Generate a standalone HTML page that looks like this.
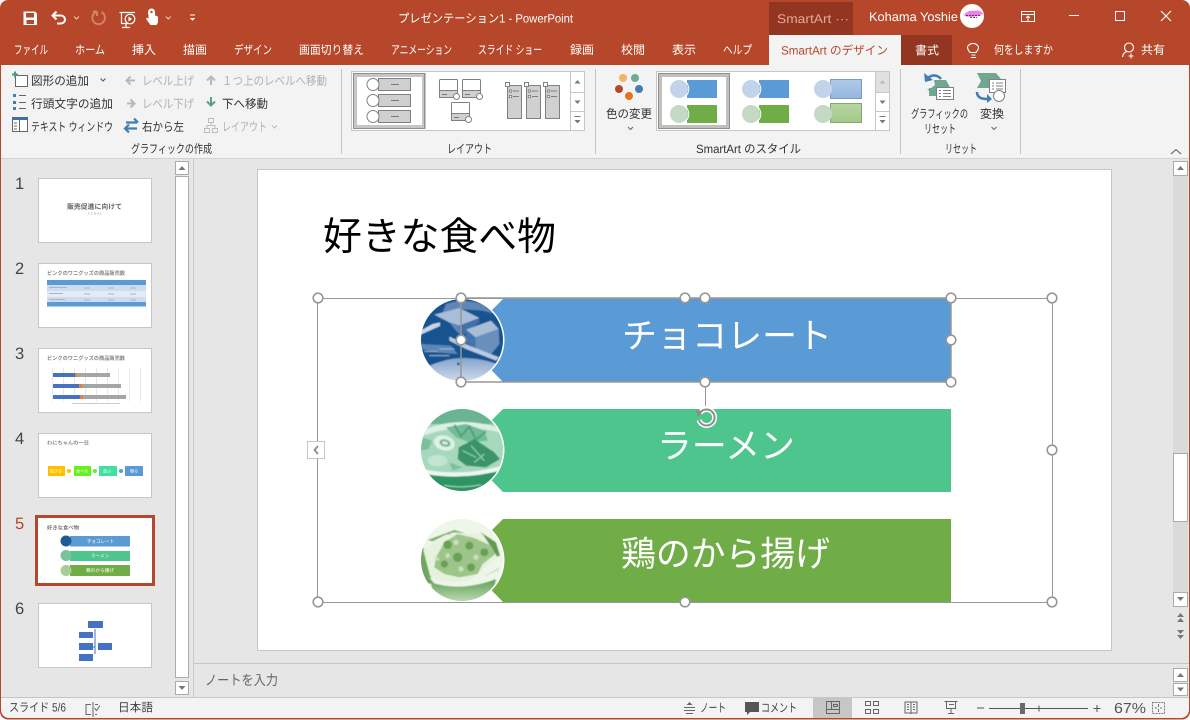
<!DOCTYPE html>
<html lang="ja"><head><meta charset="utf-8"><title>PowerPoint</title>
<style>
html,body{margin:0;padding:0;background:#fff;width:1190px;height:720px;overflow:hidden}
svg{display:block;font-family:"Liberation Sans","Noto Sans CJK JP",sans-serif;font-size:12px}
.d{fill:#333}.g{fill:#b0b0b0}.w{fill:#fff}
.sb{fill:#fff;stroke:#ababab;stroke-width:1}
.ar{fill:#777}
.h{fill:#fff;stroke:#979797;stroke-width:1.6}
.ln{fill:none;stroke:#808080;stroke-width:1}
</style></head><body>
<svg width="1190" height="720" viewBox="0 0 1190 720" xmlns="http://www.w3.org/2000/svg" text-rendering="geometricPrecision">
<defs>
<clipPath id="c1"><circle cx="462" cy="340" r="41.500"/></clipPath>
<clipPath id="c2"><circle cx="462" cy="450" r="41.500"/></clipPath>
<clipPath id="c3"><circle cx="462" cy="560" r="41.500"/></clipPath>
<linearGradient id="gb" x1="0" y1="0" x2="0" y2="1"><stop offset="0" stop-color="#b0cbe9"/><stop offset="1" stop-color="#94b6df"/></linearGradient>
<linearGradient id="gg" x1="0" y1="0" x2="0" y2="1"><stop offset="0" stop-color="#b6d6a3"/><stop offset="1" stop-color="#a2c989"/></linearGradient>
<linearGradient id="cb" x1="0" y1="0" x2="0" y2="1"><stop offset="0" stop-color="#86a3cc"/><stop offset="1" stop-color="#dfe6f2"/></linearGradient>
<linearGradient id="kb" x1="0" y1="0" x2="0" y2="1"><stop offset="0" stop-color="#5f9f56"/><stop offset="1" stop-color="#cfe4c4"/></linearGradient>
<filter id="bl" x="-5%" y="-5%" width="110%" height="110%"><feGaussianBlur stdDeviation="0.5"/></filter>
</defs>
<!-- window -->
<rect x="0" y="0" width="1190" height="719.500" rx="8" fill="#b7472a"/>
<rect x="1" y="65" width="1188" height="93" fill="#f3f3f3"/>
<rect x="1" y="158" width="1188" height="1" fill="#d2d2d2"/>
<rect x="1" y="159" width="1188" height="539" fill="#e6e6e6"/>
<path d="M1 698H1189V710a8 8 0 0 1-8 8H9a8 8 0 0 1-8-8Z" fill="#f3f3f3"/>
<rect x="1" y="697" width="1188" height="1" fill="#c6c6c6"/>

<!-- title bar -->
<path d="M23.500 11.500H35l2 2V25H23.500ZM26 13v4.500h8V13ZM26.500 20v4h7.500v-4Z" fill="#fff" fill-rule="evenodd"/>
<path d="M53 15.500H61a4 4 0 0 1 0 8H57M56.500 11.500L52.500 15.500L56.500 19.500" fill="none" stroke="#fff" stroke-width="2"/>
<path d="M74 16.500l2.500 2.500l2.500-2.500M165.800 16.500l2.500 2.500l2.500-2.500" fill="none" stroke="#e9c9bf" stroke-width="1"/>
<path d="M101.500 12.200a6.300 6.300 0 1 1-5-.3M97 11.500v4.500M97 11.500h-4" fill="none" stroke="#d3816b" stroke-width="2"/>
<path d="M119.500 12.500H135M121.500 12.500V23.500H128M126 24v3M122 27.500h8" fill="none" stroke="#fff" stroke-width="1.200"/>
<circle cx="130" cy="19" r="4.800" fill="#b7472a" stroke="#fff" stroke-width="1.200"/><path d="M128.500 16.500l3.500 2.500l-3.500 2.500Z" fill="#fff"/>
<path d="M148 12a3.500 3.500 0 0 1 7 0v3.500l2 .5c.8.300 1 1 1 2v4.500l-1.500 2.500h-6l-3-4l-1.500-2.500l1 -.8l1.500 1V15c-.5-.8-.500-1.800-.5-3Z" fill="#fff"/>
<circle cx="151.500" cy="12" r="1.200" fill="#b7472a"/>
<path d="M190 15h5" stroke="#fff" stroke-width="1"/><path d="M189.800 18h5.400l-2.700 2.800Z" fill="#fff"/>
<text x="398" y="22.500" class="w" textLength="175" lengthAdjust="spacingAndGlyphs" font-size="12">プレゼンテーション1  -  PowerPoint</text>
<rect x="769" y="2" width="84" height="33" fill="#933621"/>
<text x="777" y="23" fill="#e4a894" textLength="72" lengthAdjust="spacingAndGlyphs" font-size="12.500">SmartArt ···</text>
<text x="869" y="21" class="w" textLength="89" lengthAdjust="spacingAndGlyphs" font-size="12.500">Kohama Yoshie</text>
<circle cx="972" cy="16" r="12" fill="#fff"/>
<path d="M968 13.500l4-2.500 10-.5c2 1 3.500 2 4 3.500l-3 1.500-8 1.500-6-.5-2-1Z" fill="#ee7fe8" transform="translate(-3 0)"/>
<path d="M966 15.500h14M970 17.500h7" stroke="#222" stroke-width=".8" stroke-dasharray="2 1" fill="none"/>
<path d="M1021.500 11.500h13v10h-13ZM1021.500 14.500h13M1028 21v-4.500M1026 18l2-2l2 2" fill="none" stroke="#fff" stroke-width="1"/>
<path d="M1069 15.500h10" stroke="#fff" stroke-width="1"/>
<rect x="1115.500" y="11.500" width="9" height="9" fill="none" stroke="#fff" stroke-width="1"/>
<path d="M1161 11l10 10M1171 11l-10 10" stroke="#fff" stroke-width="1.100"/>

<!-- tabs -->
<g class="w" font-size="12">
<text x="14" y="54" class="w" textLength="34" lengthAdjust="spacingAndGlyphs">ファイル</text>
<text x="75" y="54" class="w" textLength="30" lengthAdjust="spacingAndGlyphs">ホーム</text>
<text x="132" y="54" class="w" textLength="24" lengthAdjust="spacingAndGlyphs">挿入</text>
<text x="183" y="54" class="w" textLength="24" lengthAdjust="spacingAndGlyphs">描画</text>
<text x="234" y="54" class="w" textLength="38" lengthAdjust="spacingAndGlyphs">デザイン</text>
<text x="299" y="54" class="w" textLength="65" lengthAdjust="spacingAndGlyphs">画面切り替え</text>
<text x="391" y="54" class="w" textLength="61" lengthAdjust="spacingAndGlyphs">アニメーション</text>
<text x="478" y="54" class="w" textLength="64" lengthAdjust="spacingAndGlyphs">スライド ショー</text>
<text x="570" y="54" class="w" textLength="24" lengthAdjust="spacingAndGlyphs">録画</text>
<text x="621" y="54" class="w" textLength="24" lengthAdjust="spacingAndGlyphs">校閲</text>
<text x="672" y="54" class="w" textLength="24" lengthAdjust="spacingAndGlyphs">表示</text>
<text x="723" y="54" class="w" textLength="29" lengthAdjust="spacingAndGlyphs">ヘルプ</text>
</g>
<rect x="769" y="35" width="132" height="30" fill="#f3f3f3"/>
<text x="781" y="54.500" fill="#b7472a" textLength="107" lengthAdjust="spacingAndGlyphs">SmartArt のデザイン</text>
<rect x="901" y="35" width="51" height="30" fill="#933621"/>
<text x="915" y="54.500" class="w" textLength="24" lengthAdjust="spacingAndGlyphs">書式</text>
<path d="M971 57.500h5M971.500 55h4M970 52.500c-1-1.500-2.500-2.800-2.500-5.500a6 6 0 0 1 11 0c0 2.700-1.500 4-2.500 5.500Z" fill="none" stroke="#fff" stroke-width="1.100"/>
<text x="994" y="54" class="w" textLength="59" lengthAdjust="spacingAndGlyphs">何をしますか</text>
<circle cx="1129" cy="47.500" r="4.500" fill="none" stroke="#fff" stroke-width="1.100"/>
<path d="M1122.500 57c.5-3.500 2.500-5 4.500-5.500M1131 53.500v5M1128.500 56h5" fill="none" stroke="#fff" stroke-width="1.100"/>
<text x="1141" y="54" class="w" textLength="24" lengthAdjust="spacingAndGlyphs">共有</text>

<!-- ribbon group 1 -->
<rect x="15.500" y="75.500" width="12" height="11" fill="#fff" stroke="#666"/>
<path d="M15 71.500v6M12 74.500h6" stroke="#4b9b7c" stroke-width="2"/>
<text x="31" y="85" class="d" textLength="58" lengthAdjust="spacingAndGlyphs">図形の追加</text>
<path d="M100.500 78.500l2.500 2.500l2.500-2.500" fill="none" stroke="#555"/>
<g fill="#3f7fb5"><rect x="13" y="94" width="3" height="3"/><rect x="13" y="101" width="3" height="3"/><rect x="13" y="107" width="3" height="3"/></g>
<path d="M19 95.500h7M19 102.500h7M19 108.500h7" stroke="#666"/>
<text x="31" y="108" class="d" textLength="82" lengthAdjust="spacingAndGlyphs">行頭文字の追加</text>
<rect x="12.500" y="117.500" width="15" height="14" fill="#fff" stroke="#666"/><rect x="12" y="117" width="16" height="3" fill="#3f6fa8"/>
<path d="M19.500 120v11M14 123h3M14 126h3M14 129h3" stroke="#666"/>
<text x="31" y="131" class="d" textLength="82" lengthAdjust="spacingAndGlyphs">テキスト ウィンドウ</text>
<path d="M135 80.500h-8M130.500 76.500l-4 4l4 4" fill="none" stroke="#b8b8b8" stroke-width="2"/>
<text x="142" y="85" class="g" textLength="52" lengthAdjust="spacingAndGlyphs">レベル上げ</text>
<path d="M127 103.500h7M130.500 99.500l4 4l-4 4" fill="none" stroke="#b8b8b8" stroke-width="2"/>
<text x="142" y="108" class="g" textLength="52" lengthAdjust="spacingAndGlyphs">レベル下げ</text>
<path d="M126 122.500h11M134 118.500l4 4" fill="none" stroke="#3f7fb5" stroke-width="2.200"/>
<path d="M137 128.500h-11M129 124.500l-4 4l4 4" fill="none" stroke="#3f7fb5" stroke-width="2.200"/>
<text x="142" y="131" class="d" textLength="42" lengthAdjust="spacingAndGlyphs">右から左</text>
<path d="M211 85v-8M207 80.500l4-4l4 4" fill="none" stroke="#b8b8b8" stroke-width="2"/>
<text x="222" y="85" class="g" textLength="105" lengthAdjust="spacingAndGlyphs">１つ上のレベルへ移動</text>
<path d="M211 97v8M207 101.500l4 4l4-4" fill="none" stroke="#5f9e88" stroke-width="2"/>
<text x="222" y="108" class="d" textLength="46" lengthAdjust="spacingAndGlyphs">下へ移動</text>
<path d="M208.500 118.500h5v4h-5ZM204.500 128.500h5v4h-5ZM212.500 128.500h5v4h-5ZM211 122.500v3M207 128v-2.500h8v2.500" fill="none" stroke="#bdbdbd"/>
<text x="222" y="131" class="g" textLength="45" lengthAdjust="spacingAndGlyphs">レイアウト</text>
<path d="M272 125.500l2.500 2.500l2.500-2.500" fill="none" stroke="#b8b8b8"/>
<text x="131" y="153" class="d" textLength="81" lengthAdjust="spacingAndGlyphs">グラフィックの作成</text>
<rect x="341" y="69" width="1" height="85" fill="#c4c4c4"/>

<!-- layout gallery -->
<rect x="351.500" y="71.500" width="233" height="59" fill="#fff" stroke="#c6c6c6"/>
<rect x="355" y="75" width="69" height="52" fill="#fff" stroke="#c6c6c6" stroke-width="4"/>
<rect x="353.500" y="73.500" width="71" height="55" fill="none" stroke="#8f8f8f"/>
<g fill="#d0d0d0" stroke="#808080">
<rect x="378.500" y="78.500" width="32" height="12"/><rect x="378.500" y="94.500" width="32" height="12"/><rect x="378.500" y="110.500" width="32" height="12"/>
</g>
<g fill="#fff" stroke="#808080"><circle cx="373" cy="84.500" r="6"/><circle cx="373" cy="100.500" r="6"/><circle cx="373" cy="116.500" r="6"/></g>
<path d="M391 84.500h8M391 100.500h8M391 116.500h8" stroke="#777"/>
<g>
<rect x="439.500" y="79.500" width="18" height="18" rx="1" fill="#fff" stroke="#808080"/><rect x="439.500" y="90.500" width="18" height="7" fill="#d0d0d0" stroke="#808080"/>
<rect x="462.500" y="79.500" width="18" height="18" rx="1" fill="#fff" stroke="#808080"/><rect x="462.500" y="90.500" width="18" height="7" fill="#d0d0d0" stroke="#808080"/>
<rect x="451.500" y="102.500" width="18" height="18" rx="1" fill="#fff" stroke="#808080"/><rect x="451.500" y="113.500" width="18" height="7" fill="#d0d0d0" stroke="#808080"/>
<path d="M442 94.500h5M465 94.500h5M454 117.500h5" stroke="#777"/>
<g fill="#fff" stroke="#808080"><circle cx="456.500" cy="96.500" r="3"/><circle cx="479.500" cy="96.500" r="3"/><circle cx="468.500" cy="119.500" r="3"/></g>
</g>
<g fill="#d0d0d0" stroke="#808080"><rect x="507.500" y="85.500" width="14" height="33"/><rect x="526.500" y="85.500" width="14" height="33"/><rect x="545.500" y="85.500" width="14" height="33"/></g>
<g fill="#fff" stroke="#808080"><rect x="505.500" y="82.500" width="4" height="4"/><rect x="524.500" y="82.500" width="4" height="4"/><rect x="543.500" y="82.500" width="4" height="4"/>
<circle cx="510.500" cy="91" r="1.300"/><circle cx="510.500" cy="96.500" r="1.300"/><circle cx="529.500" cy="91" r="1.300"/><circle cx="529.500" cy="96.500" r="1.300"/><circle cx="548.500" cy="91" r="1.300"/><circle cx="548.500" cy="96.500" r="1.300"/></g>
<path d="M513 91h6M513 96.500h6M532 91h6M532 96.500h6M551 91h6M551 96.500h6" stroke="#808080"/>
<path d="M570.500 71.500v59M570.500 92.500h14M570.500 111.500h14" stroke="#c6c6c6" fill="none"/>
<path class="ar" d="M574.500 83.500l3-3.500l3 3.500Z"/><path class="ar" d="M574.500 100.500l3 3.500l3-3.500Z"/><path class="ar" d="M574.500 116h6v1h-6Z"/><path class="ar" d="M574.500 120l3 3.500l3-3.500Z"/>
<text x="447" y="153" class="d" textLength="45" lengthAdjust="spacingAndGlyphs">レイアウト</text>
<rect x="595" y="69" width="1" height="85" fill="#c4c4c4"/>

<!-- colour change -->
<circle cx="623" cy="78" r="4" fill="#efb664"/><circle cx="635" cy="78" r="4" fill="#6dab94"/><circle cx="619" cy="89" r="4" fill="#b7472a"/><circle cx="639" cy="89" r="4" fill="#3f7fb5"/><circle cx="629" cy="96" r="4" fill="#e5721e"/>
<text x="606" y="118" class="d" textLength="46" lengthAdjust="spacingAndGlyphs">色の変更</text>
<path d="M628 127l2.500 2.500l2.500-2.500" fill="none" stroke="#666"/>

<!-- style gallery -->
<rect x="656.500" y="71.500" width="233" height="59" fill="#fff" stroke="#c6c6c6"/>
<rect x="660" y="75" width="68" height="52" fill="#fff" stroke="#c0c0bc" stroke-width="4"/>
<rect x="658.500" y="73.500" width="71" height="55" fill="none" stroke="#8f8f8f"/>
<rect x="687" y="80" width="30" height="18" fill="#5b9bd5"/><rect x="687" y="105" width="30" height="18" fill="#70ad47"/>
<circle cx="679" cy="89" r="9" fill="#c2d3ea"/><circle cx="679" cy="114" r="9" fill="#c4dac4"/>
<circle cx="679" cy="89" r="9.800" fill="none" stroke="#fff"/><circle cx="679" cy="114" r="9.800" fill="none" stroke="#fff"/>
<rect x="759" y="80" width="30" height="18" fill="#5b9bd5"/><rect x="759" y="105" width="30" height="18" fill="#70ad47"/>
<circle cx="751" cy="89" r="9" fill="#c2d3ea"/><circle cx="751" cy="114" r="9" fill="#c4dac4"/>
<circle cx="751" cy="89" r="9.800" fill="none" stroke="#fff"/><circle cx="751" cy="114" r="9.800" fill="none" stroke="#fff"/>
<rect x="830.500" y="79.500" width="31" height="19" fill="url(#gb)" stroke="#7f9cc0"/><rect x="830.500" y="103.500" width="31" height="19" fill="url(#gg)" stroke="#84a86e"/>
<circle cx="823" cy="89" r="9" fill="#c2d3ea"/><circle cx="823" cy="114" r="9" fill="#c4dac4"/>
<rect x="875" y="72" width="14" height="20" fill="#e0e0e0"/>
<path d="M875.500 71.500v59M875.500 92.500h14M875.500 111.500h14" stroke="#c6c6c6" fill="none"/>
<path fill="#bbb" d="M879.500 83.500l3-3.500l3 3.500Z"/><path class="ar" d="M879.500 100.500l3 3.500l3-3.500Z"/><path class="ar" d="M879.500 116h6v1h-6Z"/><path class="ar" d="M879.500 120l3 3.500l3-3.500Z"/>
<text x="696" y="153" class="d" textLength="105" lengthAdjust="spacingAndGlyphs">SmartArt のスタイル</text>
<rect x="900" y="69" width="1" height="85" fill="#c4c4c4"/>

<!-- reset -->
<path d="M941 79c-3-4-9-5-13-1" fill="none" stroke="#3f7fb5" stroke-width="2.500"/><path d="M924 73l1 9l8-2Z" fill="#3f7fb5"/>
<path d="M934 80h12l5 9h-20l3 5h-1l-6-5h3l5-4Z" fill="#6fa791"/><path d="M929 88h22v8h-22Z" fill="#6fa791"/>
<rect x="936.500" y="87.500" width="17" height="12" fill="#fff" stroke="#808080"/>
<path d="M939 90.500h2M943 90.500h8M939 93.500h2M943 93.500h8M939 96.500h2M943 96.500h8" stroke="#808080"/>
<text x="911" y="118" class="d" textLength="57" lengthAdjust="spacingAndGlyphs">グラフィックの</text>
<text x="924" y="133" class="d" textLength="32" lengthAdjust="spacingAndGlyphs">リセット</text>
<path d="M977 73h19l5 6h-6v9h-13l-5 0l4-7Z" fill="#6fa791"/>
<rect x="989.500" y="79.500" width="16" height="13" fill="#fff" stroke="#808080"/>
<path d="M992 83h2M996 83h7M992 86h2M996 86h7M992 89h2M996 89h7" stroke="#808080"/>
<path d="M977 92c0 5 4 7 10 7" fill="none" stroke="#3f7fb5" stroke-width="2.500"/><path d="M987 94l5 5l-5 4Z" fill="#3f7fb5"/>
<circle cx="999" cy="96" r="5.500" fill="#fff" stroke="#808080"/>
<text x="980" y="118" class="d" textLength="24" lengthAdjust="spacingAndGlyphs">変換</text>
<path d="M991.500 127l2.500 2.500l2.500-2.500" fill="none" stroke="#666"/>
<text x="945" y="153" class="d" textLength="32" lengthAdjust="spacingAndGlyphs">リセット</text>
<rect x="1020" y="69" width="1" height="85" fill="#c4c4c4"/>
<path d="M1171 154l5-4.500l5 4.500" fill="none" stroke="#555"/>

<!-- thumb pane -->
<rect x="193" y="159" width="1" height="539" fill="#c9c9c9"/>
<g fill="#444" font-size="16.500">
<text x="15" y="189" fill="#444">1</text><text x="15" y="274" fill="#444">2</text><text x="15" y="359" fill="#444">3</text><text x="15" y="444" fill="#444">4</text>
<text x="15" y="529" fill="#b7472a">5</text><text x="15" y="614" fill="#444">6</text>
</g>
<g fill="#fff" stroke="#c6c6c6">
<rect x="38.500" y="178.500" width="113" height="64"/><rect x="38.500" y="263.500" width="113" height="64"/><rect x="38.500" y="348.500" width="113" height="64"/><rect x="38.500" y="433.500" width="113" height="64"/><rect x="38.500" y="603.500" width="113" height="64"/>
</g>
<rect x="36.500" y="516.500" width="117" height="68" fill="#fff" stroke="#b7472a" stroke-width="3"/>
<!-- t1 -->
<text x="67" y="209" font-size="7" fill="#666" font-weight="bold" textLength="55" lengthAdjust="spacingAndGlyphs">販売促進に向けて</text>
<text x="88" y="214.500" font-size="3" fill="#999" textLength="14" lengthAdjust="spacingAndGlyphs">わにちゃん</text>
<!-- t2 -->
<text x="47" y="275" font-size="5.500" fill="#888" font-weight="bold" textLength="78" lengthAdjust="spacingAndGlyphs">ピンクのワニグッズの商品販売数</text>
<rect x="47" y="280" width="99" height="26" fill="#e3ebf6"/><rect x="47" y="280" width="99" height="5" fill="#5b9bd5"/><rect x="47" y="285" width="99" height="6" fill="#cfdcee"/><rect x="47" y="297" width="99" height="5" fill="#cfdcee"/><rect x="47" y="302" width="99" height="4.500" fill="#5b9bd5"/>
<path d="M49 287.500h18M49 293.500h14M49 299.500h16M84 288h6M108 288h6M130 288h6M84 294h6M108 294h6M130 294h6M84 300h6M108 300h6M130 300h6" stroke="#a9b5c5" stroke-width="1"/>
<!-- t3 -->
<text x="47" y="360" font-size="5.500" fill="#888" font-weight="bold" textLength="78" lengthAdjust="spacingAndGlyphs">ピンクのワニグッズの商品販売数</text>
<path d="M52.500 368v33M63.500 368v33M74.500 368v33M85.500 368v33M96.500 368v33M107.500 368v33M118.500 368v33M129.500 368v33M140.500 368v33" stroke="#e8e8e8"/>
<rect x="53" y="373" width="57" height="4" fill="#a5a5a5"/><rect x="53" y="373" width="24" height="4" fill="#4472c4"/><rect x="75" y="373" width="2" height="4" fill="#ed7d31"/>
<rect x="53" y="384" width="68" height="4" fill="#a5a5a5"/><rect x="53" y="384" width="26" height="4" fill="#4472c4"/><rect x="79" y="384" width="3" height="4" fill="#ed7d31"/>
<rect x="53" y="395" width="73" height="4" fill="#a5a5a5"/><rect x="53" y="395" width="27" height="4" fill="#4472c4"/><rect x="80" y="395" width="3" height="4" fill="#ed7d31"/>
<path d="M72 403.500h48" stroke="#ccc"/>
<!-- t4 -->
<text x="47" y="444.500" font-size="5" fill="#888" font-weight="bold" textLength="42" lengthAdjust="spacingAndGlyphs">わにちゃんの一日</text>
<rect x="48" y="466" width="17" height="10" fill="#ffc000"/><rect x="74" y="466" width="17" height="10" fill="#66f022"/><rect x="99" y="466" width="18" height="10" fill="#3fe0a0"/><rect x="125" y="466" width="18" height="10" fill="#5b9bd5"/>
<circle cx="69" cy="471" r="2" fill="#ffc000"/><circle cx="95" cy="471" r="2" fill="#66f022"/><circle cx="121" cy="471" r="2" fill="#5b9bd5"/>
<g font-size="4" fill="#fff"><text x="50" y="472.500" fill="#fff">起きる</text><text x="76" y="472.500" fill="#fff">食べる</text><text x="103" y="472.500" fill="#fff">遊ぶ</text><text x="130" y="472.500" fill="#fff">寝る</text></g>
<!-- t5 -->
<text x="47" y="529.500" font-size="5.300" fill="#777" font-weight="bold" textLength="32" lengthAdjust="spacingAndGlyphs">好きな食べ物</text>
<rect x="70" y="536" width="60" height="10.500" fill="#5b9bd5"/><rect x="70" y="551" width="60" height="10" fill="#4dc58c"/><rect x="70" y="565" width="60" height="11" fill="#70ad47"/>
<circle cx="66" cy="541" r="5.500" fill="#1f5c97"/><circle cx="66" cy="555.500" r="5.500" fill="#78c29c"/><circle cx="66" cy="570.500" r="5.500" fill="#a6cd92"/>
<g font-size="5" fill="#fff"><text x="87" y="543" fill="#fff" textLength="27" lengthAdjust="spacingAndGlyphs">チョコレート</text><text x="91" y="557.500" fill="#fff" textLength="18" lengthAdjust="spacingAndGlyphs">ラーメン</text><text x="86" y="572" fill="#fff" textLength="28" lengthAdjust="spacingAndGlyphs">鶏のから揚げ</text></g>
<!-- t6 -->
<path d="M95 629v25M88 647h7" stroke="#4472c4"/>
<g fill="#4472c4"><rect x="88" y="621" width="15" height="7"/><rect x="79" y="632" width="14" height="6"/><rect x="79" y="643" width="14" height="7"/><rect x="98" y="643" width="14" height="7"/><rect x="79" y="654" width="14" height="7"/></g>
<!-- left scroll -->
<rect x="175.500" y="161.500" width="13" height="13" class="sb"/>
<rect x="175.500" y="176.500" width="13" height="501" class="sb"/>
<rect x="175.500" y="681.500" width="13" height="13" class="sb"/>
<path class="ar" d="M178.500 170l3.500-4l3.500 4Z"/><path class="ar" d="M178.500 686l3.500 4l3.500-4Z"/>

<!-- slide -->
<rect x="257.500" y="169.500" width="854" height="481" fill="#fff" stroke="#c6c6c6"/>
<text x="323" y="250" font-size="39" fill="#000" textLength="233" lengthAdjust="spacingAndGlyphs">好きな食べ物</text>
<path d="M503 299H951V382H503L462 340Z" fill="#5b9bd5"/>
<path d="M503 409H951V492H503L462 450Z" fill="#4dc58c"/>
<path d="M503 519H951V602H503L462 560Z" fill="#70ad47"/>
<text x="622" y="348" font-size="35" fill="#fff" textLength="210" lengthAdjust="spacingAndGlyphs">チョコレート</text>
<text x="657" y="458" font-size="35" fill="#fff" textLength="138" lengthAdjust="spacingAndGlyphs">ラーメン</text>
<text x="621" y="566" font-size="35" fill="#fff" textLength="209" lengthAdjust="spacingAndGlyphs">鶏のから揚げ</text>

<!-- chocolate (drawn in 3x crop coords) -->
<circle cx="462" cy="340" r="42.500" fill="#fff"/>
<g clip-path="url(#c1)"><g filter="url(#bl)"><g transform="translate(416 294) scale(.33333)">
<rect x="0" y="0" width="276" height="276" fill="#15528f"/>
<path d="M90 30Q140 12 200 30L235 60L200 50L130 45L80 55Z" fill="#5f86b6"/>
<path d="M55 62L130 42L190 72L130 95L100 85Z" fill="#a9bdd9"/>
<path d="M100 85L130 95L135 125L118 108Z" fill="#5f86b6"/>
<path d="M130 95L190 72L190 85L140 125L135 125Z" fill="#3f6fa8"/>
<path d="M150 107L225 80L248 105L178 130Z" fill="#a9bdd9"/>
<path d="M178 130L248 105L250 150L222 185L178 165Z" fill="#6a8fbd"/>
<path d="M150 107L178 130L178 165L150 145Z" fill="#4274ad"/>
<path d="M14 110L50 90L72 85L72 96L14 122Z" fill="#c9d6ea"/>
<path d="M100 128L160 155L250 190L240 200L150 165L100 140Z" fill="#b9cae2"/>
<path d="M15 150L105 155L125 180L60 175L15 165Z" fill="#5c86b8"/>
<path d="M40 185h60M70 165h45M25 172h40" stroke="#9db5d5" stroke-width="3"/>
<path d="M0 235Q80 190 150 192Q220 195 276 225V276H0Z" fill="url(#cb)"/>
<path d="M125 205l8 3l-5 6l-6-2Z" fill="#15528f"/>
</g></g></g>
<circle cx="462" cy="340" r="41.500" fill="none" stroke="#fff" stroke-width="1"/>

<!-- ramen -->
<circle cx="462" cy="450" r="42.500" fill="#fff"/>
<g clip-path="url(#c2)"><g filter="url(#bl)"><g transform="translate(416 404) scale(.33333)">
<rect x="0" y="0" width="276" height="276" fill="#a6d8bc"/>
<rect x="0" y="0" width="276" height="60" fill="#6bb491"/>
<path d="M30 75Q130 35 245 70L250 85Q130 55 25 95Z" fill="#dcf0e4"/>
<path d="M90 70L150 60L205 80L215 110L160 115L120 100Z" fill="#72bb95"/>
<path d="M115 62l20 35l25-30l20 40l30-25" fill="none" stroke="#4a9f77" stroke-width="5"/>
<path d="M128 130L175 105L235 145L252 165L210 190L150 185L125 165Z" fill="#3a9469"/>
<path d="M140 140l40 20M165 125l40 45M205 150l-30 25" stroke="#8ccba8" stroke-width="4" fill="none"/>
<ellipse cx="85" cy="117" rx="32" ry="22" fill="#dff1e7" transform="rotate(15 85 117)"/>
<ellipse cx="87" cy="117" rx="17" ry="11" fill="#71ba94" transform="rotate(15 87 117)"/>
<ellipse cx="87" cy="117" rx="9" ry="5" fill="#d5ecde" transform="rotate(15 87 117)"/>
<ellipse cx="65" cy="170" rx="30" ry="17" fill="#c3e4d1"/>
<path d="M18 100l30 10l-10 25l-25 5Z" fill="#7cc09c"/>
<path d="M100 175l40 15l-30 10Z" fill="#7cc09c"/>
<path d="M0 190Q130 225 276 180L276 196Q130 235 0 205Z" fill="#eaf6ef"/>
<path d="M0 204Q130 236 276 194V276H0Z" fill="#2f9463"/>
<path d="M85 244Q138 254 195 242" fill="none" stroke="#a6d8bc" stroke-width="3"/>
</g></g></g>
<circle cx="462" cy="450" r="41.500" fill="none" stroke="#fff" stroke-width="1"/>

<!-- karaage -->
<circle cx="462" cy="560" r="42.500" fill="#fff"/>
<g clip-path="url(#c3)"><g filter="url(#bl)"><g transform="translate(416 514) scale(.33333)">
<rect x="0" y="0" width="276" height="276" fill="#eef6e9"/>
<path d="M35 78L115 48L150 58L90 62L50 82Z" fill="#7fae6a"/>
<path d="M195 55L240 85L252 125L225 135L210 95Z" fill="#5f9a50"/>
<path d="M0 90L25 105L45 190L75 215L20 205L0 170Z" fill="#6ea75e"/>
<path d="M22 108L55 85L110 55L200 60L245 130L190 175L150 205L75 205L42 185Z" fill="#e6f2de"/>
<path d="M60 130L85 85L125 60L175 72L225 95L238 120L200 150L185 180L130 190L85 180L55 160Z" fill="#9dc58a"/>
<g fill="#6b9f58"><circle cx="95" cy="92" r="13"/><circle cx="160" cy="95" r="12"/><circle cx="125" cy="130" r="14"/><circle cx="205" cy="115" r="12"/><circle cx="85" cy="150" r="11"/><circle cx="165" cy="160" r="12"/></g>
<g fill="#c9e0bb"><circle cx="120" cy="85" r="8"/><circle cx="180" cy="130" r="8"/><circle cx="95" cy="125" r="7"/><circle cx="135" cy="165" r="8"/><circle cx="65" cy="135" r="5"/></g>
<path d="M205 185l45-25l-10 30l-30 5Z" fill="#cfe4c4"/>
<path d="M40 190Q130 225 245 170L240 205Q140 240 60 215Z" fill="#eef6e9"/>
<path d="M45 205Q135 235 240 195L225 276H55Z" fill="url(#kb)"/>
</g></g></g>
<circle cx="462" cy="560" r="41.500" fill="none" stroke="#fff" stroke-width="1"/>

<!-- selection -->
<rect x="317.500" y="298.500" width="735" height="304" fill="none" stroke="#979797"/>
<rect x="461" y="298" width="490" height="84" fill="none" stroke="#979797" stroke-width="1.500"/>
<path d="M705.500 382v24" stroke="#979797"/>
<g class="h">
<circle cx="318" cy="298" r="4.800" class="h"/><circle cx="685" cy="298" r="4.800" class="h"/><circle cx="1052" cy="298" r="4.800" class="h"/><circle cx="1052" cy="450" r="4.800" class="h"/><circle cx="318" cy="602" r="4.800" class="h"/><circle cx="685" cy="602" r="4.800" class="h"/><circle cx="1052" cy="602" r="4.800" class="h"/>
<circle cx="461" cy="298" r="4.800" class="h"/><circle cx="705" cy="298" r="4.800" class="h"/><circle cx="951" cy="298" r="4.800" class="h"/><circle cx="461" cy="340" r="4.800" class="h"/><circle cx="951" cy="340" r="4.800" class="h"/><circle cx="461" cy="382" r="4.800" class="h"/><circle cx="705" cy="382" r="4.800" class="h"/><circle cx="951" cy="382" r="4.800" class="h"/>
</g>
<rect x="307.500" y="441.500" width="17" height="17" fill="#fff" stroke="#c6c6c6"/>
<path d="M318 446l-3.500 4l3.500 4" fill="none" stroke="#8c8c8c" stroke-width="1.800"/>
<path d="M700 413a8 8 0 1 1-1 7" fill="none" stroke="#fff" stroke-width="5"/>
<path d="M700 413a8 8 0 1 1-1 7" fill="none" stroke="#8c8c8c" stroke-width="2"/>
<path d="M696 410l7 1l-5 6Z" fill="#8c8c8c"/>

<!-- right scroll -->
<rect x="1173" y="161" width="15" height="445" fill="#dadada"/>
<rect x="1173.500" y="161.500" width="14" height="14" class="sb"/>
<rect x="1173.500" y="453.500" width="14" height="68" class="sb"/>
<rect x="1173.500" y="592.500" width="14" height="14" class="sb"/>
<path class="ar" d="M1177 170l3.500-4l3.500 4Z"/><path class="ar" d="M1177 597l3.500 4l3.500-4Z"/>
<path class="ar" d="M1177 617l3.500-4l3.500 4ZM1177 622l3.500-4l3.500 4Z"/>
<path class="ar" d="M1177 630l3.500 4l3.500-4ZM1177 635l3.500 4l3.500-4Z"/>

<!-- notes -->
<rect x="194" y="663" width="995" height="1" fill="#c6c6c6"/>
<text x="205" y="685" fill="#666" textLength="73" lengthAdjust="spacingAndGlyphs" font-size="14">ノートを入力</text>
<rect x="1173.500" y="668.500" width="14" height="13" class="sb"/>
<rect x="1173.500" y="683.500" width="14" height="12" class="sb"/>
<path class="ar" d="M1177 677l3.500-4l3.500 4Z"/><path class="ar" d="M1177 687.500l3.500 4l3.500-4Z"/>

<!-- status -->
<text x="9" y="711.500" fill="#444" textLength="57" lengthAdjust="spacingAndGlyphs">スライド 5/6</text>
<path d="M91 704.500h-5v10h5M93 702v15M95 704.500h3M97 714.500h-2" fill="none" stroke="#666"/><path d="M94.500 708l2 2.500l3.500-5" fill="none" stroke="#666"/>
<text x="118" y="711.500" fill="#444" textLength="35" lengthAdjust="spacingAndGlyphs">日本語</text>
<path d="M684 707.500h11M684 710.500h11M686 713.500h7" stroke="#666"/><path d="M686.500 705l3-3l3 3Z" fill="#666"/>
<text x="700" y="712" fill="#444" textLength="26" lengthAdjust="spacingAndGlyphs">ノート</text>
<path d="M745 702h14v10h-9l-3 3v-3h-2Z" fill="#555"/>
<text x="761" y="712" fill="#444" textLength="36" lengthAdjust="spacingAndGlyphs">コメント</text>
<rect x="813" y="698" width="39" height="20" fill="#c6c6c4"/>
<path d="M826.500 701.500h13v12h-13ZM831.500 701.500v8h8M826.500 709.500h5M833.500 704.500h4v2h-4Z" fill="none" stroke="#666"/>
<path d="M865.500 701.500h5v4h-5ZM873.500 701.500h5v4h-5ZM865.500 709.500h5v4h-5ZM873.500 709.500h5v4h-5Z" fill="none" stroke="#666"/>
<path d="M905 702h12v11h-12ZM911 702v12M907 704.500h2M907 707h2M907 709.500h2M913 704.500h2M913 707h2M913 709.500h2" fill="none" stroke="#666"/>
<path d="M944.500 701.500h13M946.500 701.500v7h9v-7M951 708.500v5M948 713.500h6M949 704.500h5" fill="none" stroke="#666"/>
<path d="M977 708h7" stroke="#555"/>
<path d="M989 708.500h99" stroke="#555"/>
<rect x="1020" y="703" width="5" height="11" fill="#6a6a6a"/>
<path d="M1039 705.500v6" stroke="#555"/>
<path d="M1093.500 708.500h7M1097 705v7" stroke="#555"/>
<text x="1114" y="713" fill="#555" font-size="14.500" textLength="32" lengthAdjust="spacingAndGlyphs">67%</text>
<rect x="1152.500" y="702.500" width="12" height="11" fill="none" stroke="#777" stroke-dasharray="2 1"/>
<path d="M1158.500 704v3M1158.500 709v3M1155 708h2M1160 708h2" stroke="#777"/>
<path d="M0.500 8V711a8 8 0 0 0 8 8H1181.500a8 8 0 0 0 8-8V8" fill="none" stroke="#b7472a"/>
</svg>
</body></html>
